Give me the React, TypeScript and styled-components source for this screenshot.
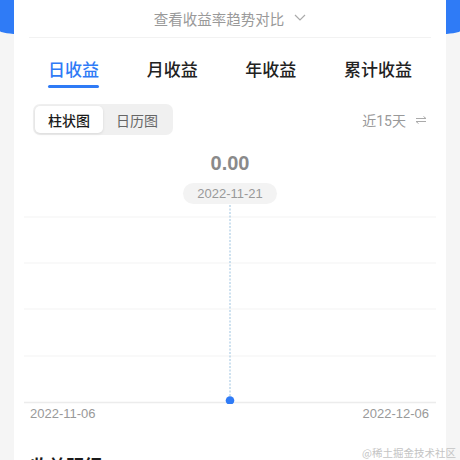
import styled, { createGlobalStyle } from "styled-components";

const GlobalStyle = createGlobalStyle`
  body {
    margin: 0;
    background: #f5f5f5;
    font-family: Roboto, "Noto Sans CJK SC", sans-serif;
  }
`;

const Page = styled.div`
  position: relative;
  width: 460px;
  height: 460px;
  overflow: hidden;
  background: #f5f5f5;
`;

const BlueHeader = styled.div`
  height: 40px;
  background: #2f7bf6;
  border-radius: 0 0 50% 50% / 0 0 9px 9px;
`;

const Card = styled.div`
  margin: -40px 14px 0;
  background: #fff;
  min-height: 500px;
`;

const TrendToggle = styled.div`
  height: 36px;
  display: flex;
  align-items: center;
  justify-content: center;
  gap: 10px;
  font-size: 14.5px;
  color: #999;
  margin: 0 15px;
  border-bottom: 1px solid #f2f2f2;
  padding-bottom: 1px;
`;

const Tabs = styled.div`
  display: flex;
  justify-content: space-between;
  padding: 20px 34px 0;
`;

const Tab = styled.div<{ $active?: boolean }>`
  display: flex;
  flex-direction: column;
  align-items: center;
  font-size: 17px;
  line-height: 24px;
  font-weight: 500;
  color: ${(p) => (p.$active ? "#2f7bf6" : "#222")};

  &::after {
    content: "";
    margin-top: 3px;
    width: 100%;
    height: 3px;
    border-radius: 2px;
    background: ${(p) => (p.$active ? "#2f7bf6" : "transparent")};
  }
`;

const Toolbar = styled.div`
  display: flex;
  align-items: center;
  justify-content: space-between;
  margin-top: 16px;
  padding: 0 19px;
`;

const Segmented = styled.div`
  display: flex;
  padding: 2px;
  background: #f0f0f0;
  border-radius: 7px;
`;

const Segment = styled.div<{ $active?: boolean }>`
  height: 27px;
  display: flex;
  align-items: center;
  padding: 0 13px;
  font-size: 14px;
  border-radius: 5px;
  font-weight: ${(p) => (p.$active ? 500 : 400)};
  color: ${(p) => (p.$active ? "#1a1a1a" : "#666")};
  background: ${(p) => (p.$active ? "#fff" : "transparent")};
  box-shadow: ${(p) => (p.$active ? "0 1px 3px rgba(0,0,0,0.1)" : "none")};
`;

const Range = styled.div`
  display: flex;
  align-items: center;
  gap: 9px;
  font-size: 14px;
  color: #999;
`;

const Value = styled.div`
  margin-top: 16px;
  text-align: center;
  font-family: "Liberation Sans", Roboto, sans-serif;
  font-size: 20px;
  line-height: 24px;
  font-weight: 700;
  color: #8a8a8a;
`;

const DatePill = styled.div`
  margin: 8px auto 0;
  width: 94px;
  height: 21px;
  border-radius: 11px;
  background: #f3f3f3;
  display: flex;
  align-items: center;
  justify-content: center;
  font-family: "Liberation Sans", sans-serif;
  font-size: 13px;
  color: #999;
`;

const Chart = styled.svg`
  display: block;
  margin: 0 auto;
`;

const AxisLabels = styled.div`
  display: flex;
  justify-content: space-between;
  padding: 1px 17px 0 16px;
  font-family: "Liberation Sans", sans-serif;
  font-size: 13px;
  line-height: 17px;
  color: #999;
`;

const SectionHead = styled.div`
  display: flex;
  justify-content: space-between;
  align-items: center;
  margin-top: 33px;
  padding: 0 16px;
`;

const SectionTitle = styled.div`
  font-size: 18px;
  line-height: 24px;
  font-weight: 700;
  color: #1a1a1a;
`;

const SectionMore = styled.div`
  font-size: 13px;
  color: #aaa;
  margin-right: 20px;
`;

const Watermark = styled.div`
  position: absolute;
  right: 4px;
  bottom: 0;
  font-size: 10.5px;
  line-height: 14px;
  color: #c4c4c4;
  font-family: "Noto Sans CJK SC", sans-serif;
`;

const gridY = [13, 59, 105, 152];

const App = () => {
  return (
    <Page>
      <GlobalStyle />
      <BlueHeader />
      <Card>
        <TrendToggle>
          查看收益率趋势对比
          <svg width="12" height="8" viewBox="0 0 12 8">
            <path d="M1 1l5 5 5-5" fill="none" stroke="#aaa" strokeWidth="1.2" />
          </svg>
        </TrendToggle>
        <Tabs>
          <Tab $active>日收益</Tab>
          <Tab>月收益</Tab>
          <Tab>年收益</Tab>
          <Tab>累计收益</Tab>
        </Tabs>
        <Toolbar>
          <Segmented>
            <Segment $active>柱状图</Segment>
            <Segment>日历图</Segment>
          </Segmented>
          <Range>
            近15天
            <svg width="12" height="8" viewBox="0 0 12 8">
              <path d="M1 2.5h10L8.5 0.5M11 5.5H1l2.5 2" fill="none" stroke="#aaa" strokeWidth="1" />
            </svg>
          </Range>
        </Toolbar>
        <Value>0.00</Value>
        <DatePill>2022-11-21</DatePill>
        <Chart width="412" height="200" viewBox="0 0 412 200">
          {gridY.map((y) => (
            <line key={y} x1="0" x2="412" y1={y} y2={y} stroke="#f3f3f3" strokeWidth="1" />
          ))}
          <line x1="0" x2="412" y1="198.5" y2="198.5" stroke="#ececec" strokeWidth="1.5" />
          <line x1="206" x2="206" y1="1" y2="200" stroke="#9cc3e0" strokeWidth="1" strokeDasharray="2 1.5" />
          <circle cx="206" cy="196.5" r="4.3" fill="#2f7bf6" />
        </Chart>
        <AxisLabels>
          <span>2022-11-06</span>
          <span>2022-12-06</span>
        </AxisLabels>
        <SectionHead>
          <SectionTitle>收益明细</SectionTitle>
          <SectionMore>查看全部 &gt;</SectionMore>
        </SectionHead>
      </Card>
      <Watermark>@稀土掘金技术社区</Watermark>
    </Page>
  );
};

export default App;
